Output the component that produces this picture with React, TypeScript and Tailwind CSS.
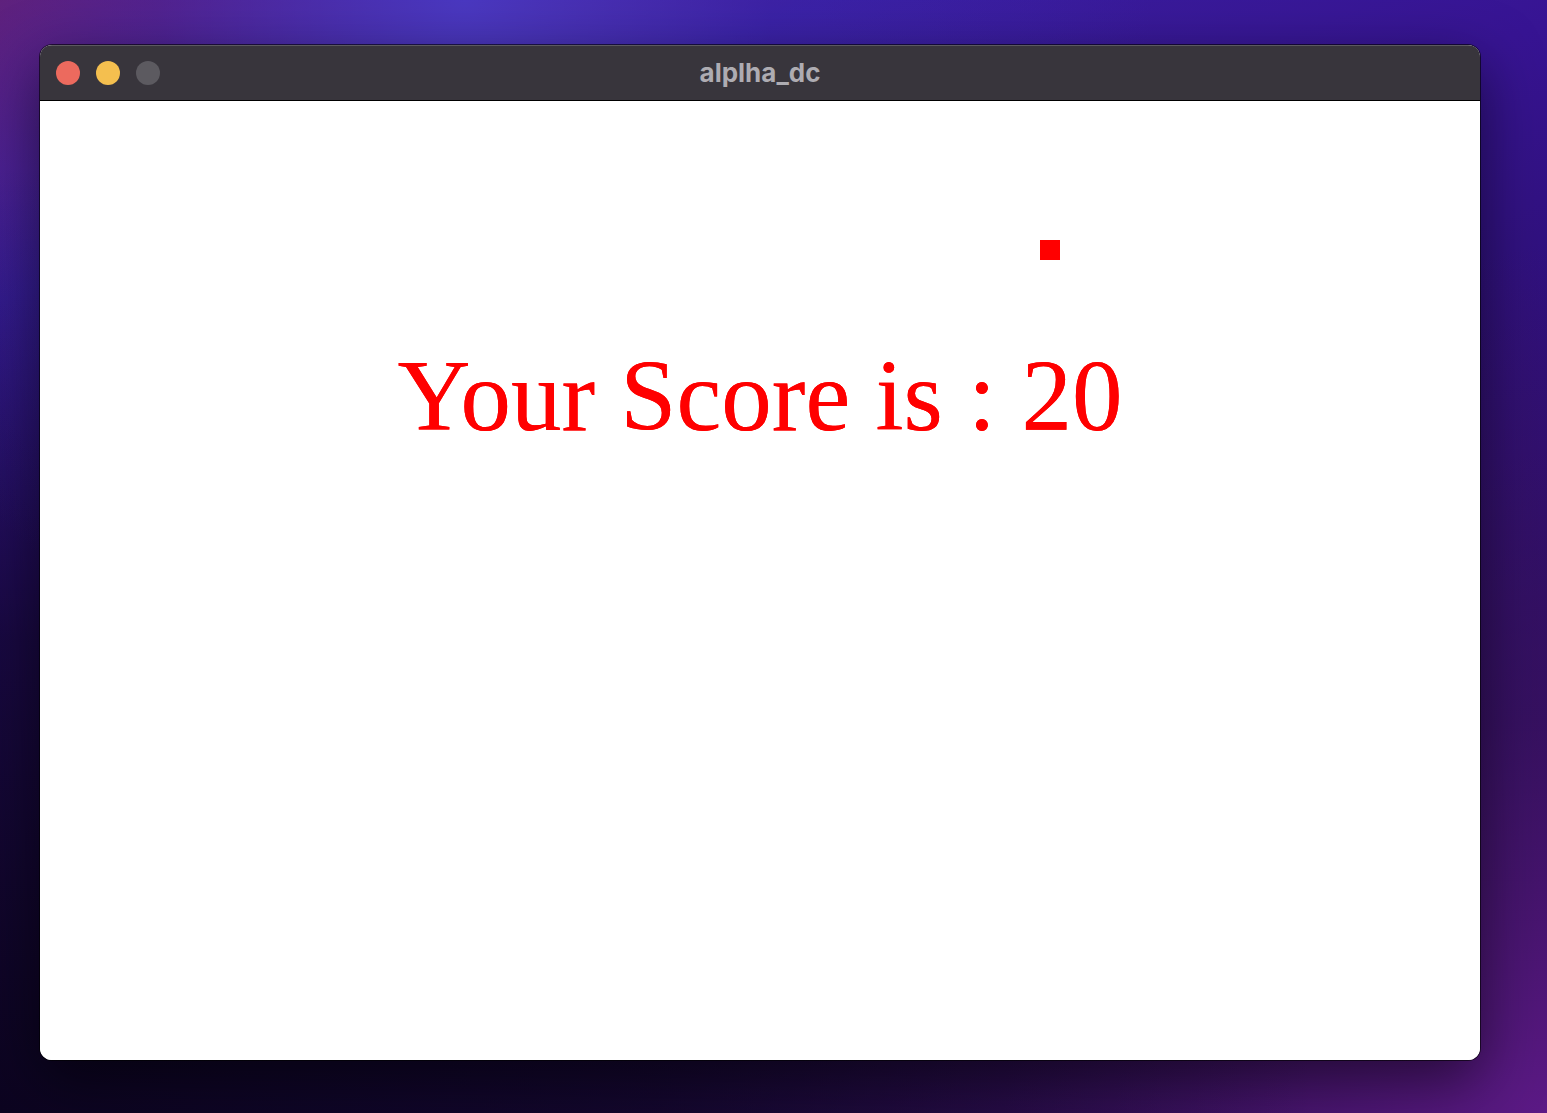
export default function App() {
  return (
    <div className="relative h-[1113px] w-[1547px] overflow-hidden bg-[#2a1170]">
      {/* wallpaper */}
      <div className="absolute inset-0 bg-[linear-gradient(160deg,#6a1f6c_0%,#3a1e9e_18%,#371493_35%,#2b0f6e_60%,#1b0b45_80%,#0e0526_100%)]" />
      <div className="absolute inset-0 bg-[radial-gradient(ellipse_at_100%_100%,#5c1a86_0%,rgba(70,20,110,0.6)_25%,transparent_55%)]" />
      <div className="absolute inset-0 bg-[radial-gradient(ellipse_at_0%_100%,#0c0420_0%,rgba(12,4,32,0.7)_30%,transparent_60%)]" />
      <div className="absolute inset-0 bg-[radial-gradient(ellipse_at_30%_0%,#4a38c0_0%,rgba(60,40,180,0.4)_20%,transparent_45%)]" />

      <div className="relative pl-[40px] pt-[45px]">
        <div className="flex h-[1015px] w-[1440px] flex-col overflow-hidden rounded-[12px] bg-white shadow-[0_20px_60px_rgba(0,0,0,0.55),0_0_0_1px_rgba(0,0,0,0.6)]">
          {/* title bar */}
          <div className="relative flex h-[56px] shrink-0 items-center border-b border-black bg-[#38353c] shadow-[inset_0_1px_0_rgba(255,255,255,0.18)]">
            <div className="flex items-center gap-[16px] pl-[16px]">
              <span className="h-[24px] w-[24px] rounded-full bg-[#ec6a5e]" />
              <span className="h-[24px] w-[24px] rounded-full bg-[#f4bf4f]" />
              <span className="h-[24px] w-[24px] rounded-full bg-[#5c5a60]" />
            </div>
            <div className="absolute inset-x-0 top-0 flex h-full items-center justify-center">
              <span className="font-['Inter',sans-serif] text-[26px] font-bold text-[#aeacb2]">
                alplha_dc
              </span>
            </div>
          </div>

          {/* game canvas */}
          <div className="relative flex-1 bg-white">
            <div className="absolute left-[1000px] top-[139px] h-[20px] w-[20px] bg-[#ff0000]" />
            <div className="flex justify-center pt-[245px]">
              <span className="font-['Liberation_Serif',serif] text-[101px] leading-[1] text-[#ff0000] [text-shadow:0_0_0.6px_#ff0000]">
                Your Score is : 20
              </span>
            </div>
          </div>
        </div>
      </div>
    </div>
  );
}
